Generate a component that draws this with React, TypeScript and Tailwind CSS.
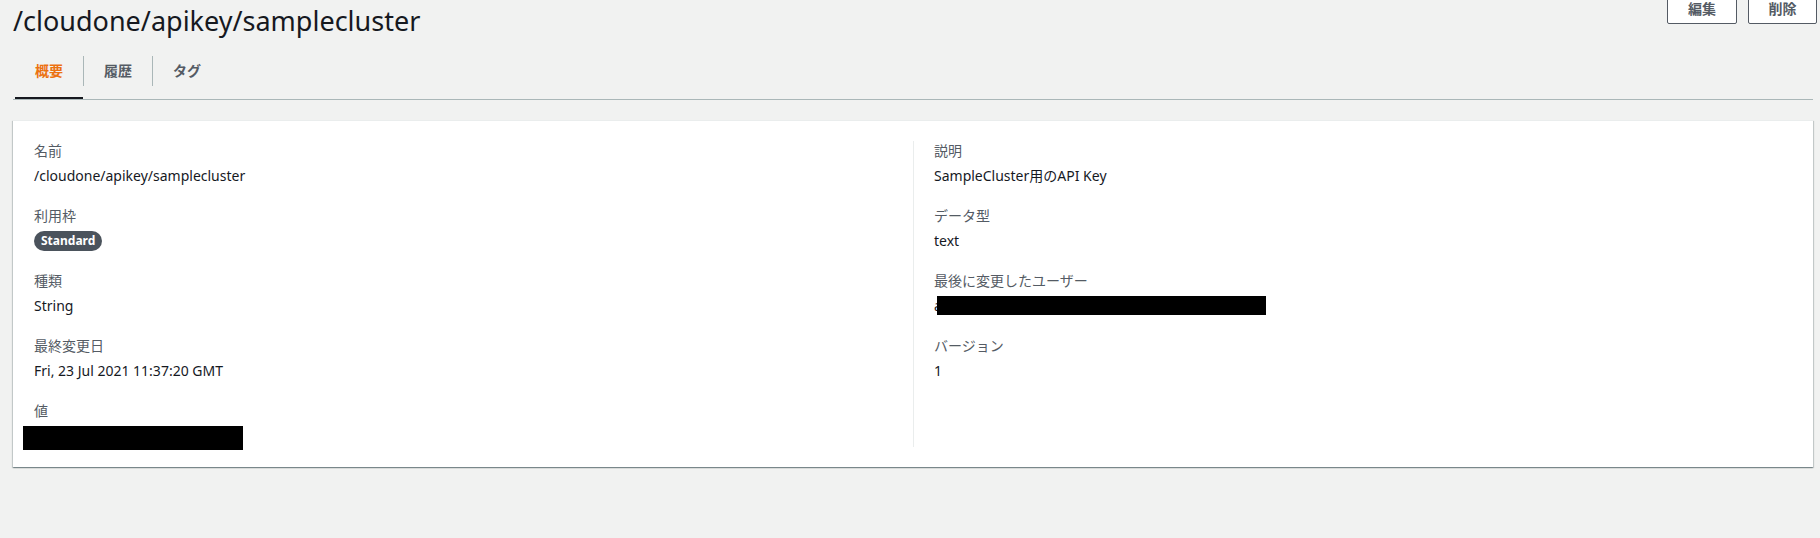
const FONT = "font-['Noto_Sans','Noto_Sans_CJK_JP',sans-serif]";

interface Field {
  label: string;
  value: React.ReactNode;
}

function Redacted({ className }: { className: string }) {
  return <div className={`bg-black ${className}`} />;
}

const LEFT: Field[] = [
  { label: "名前", value: "/cloudone/apikey/samplecluster" },
  {
    label: "利用枠",
    value: (
      <span className="inline-flex h-[20px] items-center rounded-full bg-[#4b535c] px-[7px] text-[12px] font-bold text-white">
        Standard
      </span>
    ),
  },
  { label: "種類", value: "String" },
  { label: "最終変更日", value: "Fri, 23 Jul 2021 11:37:20 GMT" },
  {
    label: "値",
    value: <Redacted className="-ml-[11px] -mb-[3px] h-[24px] w-[220px]" />,
  },
];

const RIGHT: Field[] = [
  { label: "説明", value: "SampleCluster用のAPI Key" },
  { label: "データ型", value: "text" },
  {
    label: "最後に変更したユーザー",
    value: (
      <div className="relative">
        <span>a</span>
        <Redacted className="absolute left-[3px] top-[1px] h-[19px] w-[329px]" />
      </div>
    ),
  },
  { label: "バージョン", value: "1" },
];

function FieldList({ fields }: { fields: Field[] }) {
  return (
    <div className="flex flex-col gap-[19px]">
      {fields.map((f) => (
        <div key={f.label}>
          <div className="text-[14px] leading-[20px] text-[#545b64]">{f.label}</div>
          <div className="mt-[4px] flex min-h-[22px] items-center text-[14px] leading-[22px] text-[#16191f]">
            {f.value}
          </div>
        </div>
      ))}
    </div>
  );
}

const TABS = ["概要", "履歴", "タグ"];

export default function App() {
  return (
    <div className={`h-[538px] overflow-hidden bg-[#f1f2f1] pl-[13px] pr-[7px] ${FONT}`}>
      {/* header */}
      <div className="flex h-[42px] items-start justify-between">
        <h1 className="pt-[2px] text-[27px] leading-[37px] font-normal text-[#16191f]">/cloudone/apikey/samplecluster</h1>
        <div className="-mr-[4px] -mt-[8px] flex gap-[11px]">
          <button className="h-[32px] w-[70px] rounded-[2px] border border-[#545b64] bg-white text-[14px] font-bold text-[#545b64]">
            編集
          </button>
          <button className="h-[32px] w-[69px] rounded-[2px] border border-[#545b64] bg-white text-[14px] font-bold text-[#545b64]">
            削除
          </button>
        </div>
      </div>

      {/* tabs */}
      <div className="flex border-b border-[#aab7b8] pl-[2px]">
        {TABS.map((t, i) => (
          <div key={t} className="flex">
            {i > 0 && <div className="h-[30px] w-px self-center bg-[#aab7b8]" />}
            <div
              className={`relative flex h-[57px] items-center px-[20px] text-[14px] font-bold ${
                i === 0 ? "text-[#ec7211]" : "text-[#545b64]"
              }`}
            >
              {t}
              {i === 0 && <div className="absolute bottom-0 left-0 right-0 h-[2px] bg-[#16191f]" />}
            </div>
          </div>
        ))}
      </div>

      {/* details card */}
      <div className="mt-[20px] border-t border-[#eaeded] bg-white px-[20px] py-[20px] shadow-[0_1px_1px_0_rgba(0,28,36,0.3),1px_1px_1px_0_rgba(0,28,36,0.15),-1px_1px_1px_0_rgba(0,28,36,0.15)]">
        <div className="grid grid-cols-2">
          <div className="pl-[1px]">
            <FieldList fields={LEFT} />
          </div>
          <div className="border-l border-[#eaeded] pl-[20px]">
            <FieldList fields={RIGHT} />
          </div>
        </div>
      </div>
    </div>
  );
}
